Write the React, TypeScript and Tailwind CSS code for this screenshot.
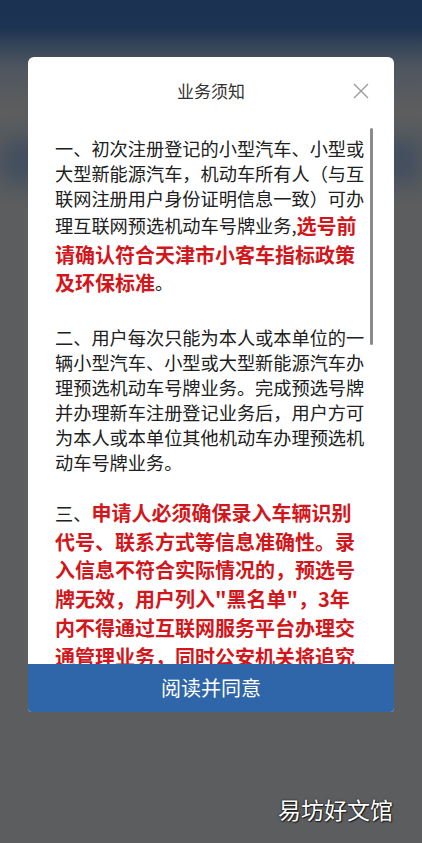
import React from "react";

const B = ({ children }: { children: React.ReactNode }) => (
  <span className="text-[18.2px] text-[#202020]">{children}</span>
);
const R = ({ children }: { children: React.ReactNode }) => (
  <span className="text-[20px] font-bold text-[#d2171c]">{children}</span>
);
const Line = ({ h, children }: { h: string; children: React.ReactNode }) => (
  <div className={`flex items-center whitespace-nowrap leading-none ${h}`}>{children}</div>
);

export default function App() {
  return (
    <div className="relative w-[422px] h-[843px] overflow-hidden bg-[#5b5d5e] font-['Noto_Sans_CJK_SC','Noto_Sans',sans-serif]">
      <div className="absolute inset-x-0 top-0 h-[110px] bg-[linear-gradient(180deg,#1a3152_0px,#1d3353_28px,#364559_46px,#4f5660_68px,#5a5c5e_100px)]" />
      <div className="absolute inset-x-0 top-[138px] h-[46px] bg-[#3a4a5f] blur-[10px] opacity-70" />

      <div className="relative flex flex-col pt-[57px] px-[28px]">
        <div className="flex h-[655px] flex-col overflow-hidden rounded-t-[6px] rounded-b-[4px] bg-white">
          <div className="relative flex h-[68px] shrink-0 items-center justify-center">
            <span className="text-[17px] text-[#333333]">业务须知</span>
            <svg className="absolute right-[25px] top-[26px]" width="16" height="16" viewBox="0 0 16 16">
              <path d="M1 1L15 15M15 1L1 15" stroke="#9b9b9b" strokeWidth="1.4" fill="none" />
            </svg>
          </div>

          <div className="relative flex-1 overflow-hidden pl-[27px] pt-[10.5px]">
            <div className="absolute left-[342px] top-[3px] h-[217px] w-[3px] rounded-full bg-[#8a8a8a]" />

            <div className="flex flex-col">
              <Line h="h-[25px]"><B>一、初次注册登记的小型汽车、小型或</B></Line>
              <Line h="h-[25px]"><B>大型新能源汽车，机动车所有人（与互</B></Line>
              <Line h="h-[25px]"><B>联网注册用户身份证明信息一致）可办</B></Line>
              <Line h="h-[30px]"><B>理互联网预选机动车号牌业务,</B><R>选号前</R></Line>
              <Line h="h-[28px]"><R>请确认符合天津市小客车指标政策</R></Line>
              <Line h="h-[28px]"><R>及环保标准</R><B>。</B></Line>
            </div>

            <div className="mt-[28px] flex flex-col">
              <Line h="h-[25px]"><B>二、用户每次只能为本人或本单位的一</B></Line>
              <Line h="h-[25px]"><B>辆小型汽车、小型或大型新能源汽车办</B></Line>
              <Line h="h-[25px]"><B>理预选机动车号牌业务。完成预选号牌</B></Line>
              <Line h="h-[25px]"><B>并办理新车注册登记业务后，用户方可</B></Line>
              <Line h="h-[25px]"><B>为本人或本单位其他机动车办理预选机</B></Line>
              <Line h="h-[25px]"><B>动车号牌业务。</B></Line>
            </div>

            <div className="mt-[24px] flex flex-col">
              <Line h="h-[28.75px]"><B>三、</B><R>申请人必须确保录入车辆识别</R></Line>
              <Line h="h-[28.75px]"><R>代号、联系方式等信息准确性。录</R></Line>
              <Line h="h-[28.75px]"><R>入信息不符合实际情况的，预选号</R></Line>
              <Line h="h-[28.75px]"><R>牌无效，用户列入"黑名单"，3年</R></Line>
              <Line h="h-[28.75px]"><R>内不得通过互联网服务平台办理交</R></Line>
              <Line h="h-[28.75px]"><R>通管理业务，同时公安机关将追究</R></Line>
              <Line h="h-[28.75px]"><R>其法律责任。</R></Line>
            </div>
          </div>

          <div className="flex h-[48px] shrink-0 items-center justify-center bg-[#2f66a9]">
            <span className="text-[20px] text-white">阅读并同意</span>
          </div>
        </div>
      </div>

      <div className="absolute right-[29px] top-[798px] text-[23px] leading-none text-white [text-shadow:0_0_2px_#000,1px_1px_1px_#222]">
        易坊好文馆
      </div>
    </div>
  );
}
